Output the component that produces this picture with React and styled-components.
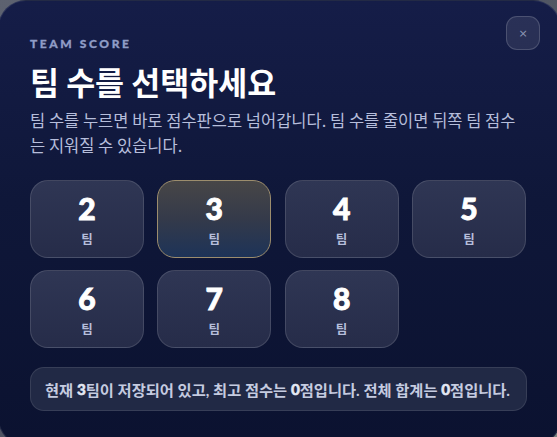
import styled, { createGlobalStyle } from 'styled-components';

const GlobalStyle = createGlobalStyle`
  html, body {
    margin: 0;
    padding: 0;
    height: 100%;
    overflow: hidden;
  }

  body {
    background: linear-gradient(135deg, #5d6270 0%, #4c5160 50%, #7c8482 100%);
    font-family: Lato, 'Noto Sans CJK KR', 'Noto Sans', sans-serif;
  }
`;

const Modal = styled.div`
  box-sizing: border-box;
  width: 563px;
  height: 446px;
  margin-left: -2px;
  padding: 36px 31px 0 31px;
  border-radius: 28px;
  border: 1px solid rgba(255, 255, 255, 0.1);
  background: linear-gradient(180deg, #151d48 0%, #0f1739 45%, #0b1230 100%);
  display: flex;
  flex-direction: column;
`;

const Header = styled.div`
  display: flex;
  align-items: flex-start;
  justify-content: space-between;
`;

const Eyebrow = styled.div`
  font-family: Lato, sans-serif;
  font-size: 12px;
  font-weight: 900;
  letter-spacing: 2.6px;
  color: #8f9cc6;
  line-height: 14px;
  -webkit-text-stroke: 0.3px #8f9cc6;
`;

const CloseButton = styled.button`
  box-sizing: border-box;
  width: 34px;
  height: 34px;
  margin-top: -21px;
  margin-right: -11px;
  border-radius: 11px;
  border: 1px solid rgba(255, 255, 255, 0.16);
  background: rgba(255, 255, 255, 0.09);
  color: #8d95b4;
  font-family: 'DejaVu Sans', sans-serif;
  font-size: 11px;
  padding: 0;
  display: flex;
  align-items: center;
  justify-content: center;
`;

const Title = styled.h1`
  margin: 11px 0 0;
  font-family: 'Noto Sans CJK KR', sans-serif;
  font-size: 31.5px;
  font-weight: 700;
  color: #ffffff;
  line-height: 38px;
`;

const Description = styled.p`
  margin: 8px 0 0;
  font-family: 'Noto Sans CJK KR', sans-serif;
  font-size: 16.5px;
  color: #b6bedb;
  line-height: 25px;
  max-width: 492px;
`;

const Grid = styled.div`
  margin-top: 22px;
  display: grid;
  grid-template-columns: repeat(4, 114px);
  grid-auto-rows: 78px;
  column-gap: 13.3px;
  row-gap: 12px;
`;

const TeamCard = styled.button`
  box-sizing: border-box;
  border-radius: 18px;
  border: 1px solid ${(p) => (p.selected ? '#9c8d6d' : 'rgba(255, 255, 255, 0.13)')};
  background: ${(p) =>
    p.selected
      ? 'linear-gradient(180deg, #474647 0%, #343a4a 50%, #1d3358 100%)'
      : 'linear-gradient(180deg, #2f3654 0%, #262c49 100%)'};
  display: flex;
  flex-direction: column;
  align-items: center;
  justify-content: center;
  padding: 0;
  gap: 6px;
`;

const TeamNumber = styled.span`
  font-family: Lato, sans-serif;
  font-size: 30px;
  font-weight: 900;
  color: #ffffff;
  line-height: 34px;
  -webkit-text-stroke: 0.9px #ffffff;
`;

const TeamLabel = styled.span`
  font-family: 'Noto Sans CJK KR', sans-serif;
  font-size: 12.5px;
  font-weight: 700;
  color: #b6bedb;
  line-height: 16px;
`;

const Summary = styled.div`
  box-sizing: border-box;
  margin-top: 19px;
  width: 497px;
  height: 44px;
  padding: 0 14px;
  border-radius: 14px;
  border: 1px solid rgba(255, 255, 255, 0.1);
  background: #212945;
  display: flex;
  align-items: center;
  font-family: Lato, 'Noto Sans CJK KR', sans-serif;
  font-size: 15.3px;
  font-weight: 700;
  color: #c5cbe0;
  white-space: nowrap;
`;

const Strong = styled.b`
  font-family: Lato, sans-serif;
  font-weight: 900;
  color: #e2e6f2;
  -webkit-text-stroke: 0.5px #e2e6f2;
`;

const teams = [2, 3, 4, 5, 6, 7, 8];

export default function App() {
  const current = 3;

  return (
    <>
      <GlobalStyle />
      <Modal>
        <Header>
          <Eyebrow>TEAM SCORE</Eyebrow>
          <CloseButton aria-label="닫기">×</CloseButton>
        </Header>
        <Title>팀 수를 선택하세요</Title>
        <Description>
          팀 수를 누르면 바로 점수판으로 넘어갑니다. 팀 수를 줄이면 뒤쪽 팀 점수는 지워질 수 있습니다.
        </Description>
        <Grid>
          {teams.map((n) => (
            <TeamCard key={n} selected={n === current}>
              <TeamNumber>{n}</TeamNumber>
              <TeamLabel>팀</TeamLabel>
            </TeamCard>
          ))}
        </Grid>
        <Summary>
          현재&nbsp;<Strong>{current}</Strong>팀이 저장되어 있고, 최고 점수는&nbsp;<Strong>0</Strong>점입니다. 전체 합계는&nbsp;
          <Strong>0</Strong>점입니다.
        </Summary>
      </Modal>
    </>
  );
}
